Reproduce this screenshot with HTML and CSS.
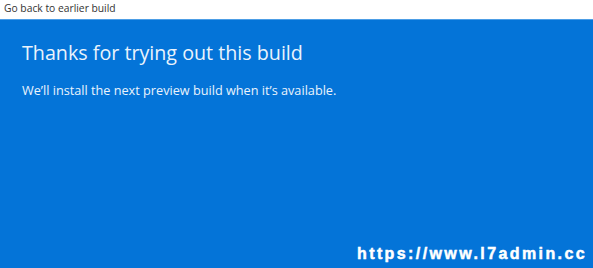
FILE: index.html
```html
<!DOCTYPE html>
<html>
<head>
<meta charset="utf-8">
<link rel="stylesheet" href="styles.css">
</head>
<body>
<div class="page">
  <div class="topbar">Go back to earlier build</div>
  <div class="panel">
    <h1 class="title">Thanks for trying out this build</h1>
    <p class="subtitle">We’ll install the next preview build when it’s available.</p>
    <div class="spacer"></div>
    <div class="watermark">https://www.l7admin.cc</div>
  </div>
</div>
</body>
</html>
```
FILE: styles.css
```css
html, body {
  margin: 0;
  padding: 0;
}
body {
  width: 593px;
  height: 268px;
  overflow: hidden;
  font-family: "Open Sans", "Noto Sans", sans-serif;
}
.page {
  display: flex;
  flex-direction: column;
  height: 268px;
}
.topbar {
  height: 19px;
  background: #ffffff;
  color: #333333;
  font-size: 10.3px;
  line-height: 17px;
  padding-left: 4px;
  box-sizing: border-box;
}
.panel {
  flex: 1;
  background: #0474d8;
  border-top: 1px solid #4d9ee6;
  display: flex;
  flex-direction: column;
  padding: 0 6px 0 22px;
  color: #ffffff;
}
.title {
  margin: 19px 0 0 0;
  font-weight: 400;
  font-size: 19.7px;
  line-height: 28px;
  color: #eaf3fc;
}
.subtitle {
  margin: 15px 0 0 0;
  font-size: 12.7px;
  line-height: 16px;
  color: #eaf3fc;
}
.spacer {
  flex: 1;
}
.watermark {
  align-self: flex-end;
  font-family: "Liberation Sans", Arial, sans-serif;
  font-weight: 700;
  font-size: 16px;
  letter-spacing: 2.4px;
  line-height: 20px;
  margin-bottom: 4px;
  color: #ffffff;
  -webkit-text-stroke: 0.5px #ffffff;
}
```
